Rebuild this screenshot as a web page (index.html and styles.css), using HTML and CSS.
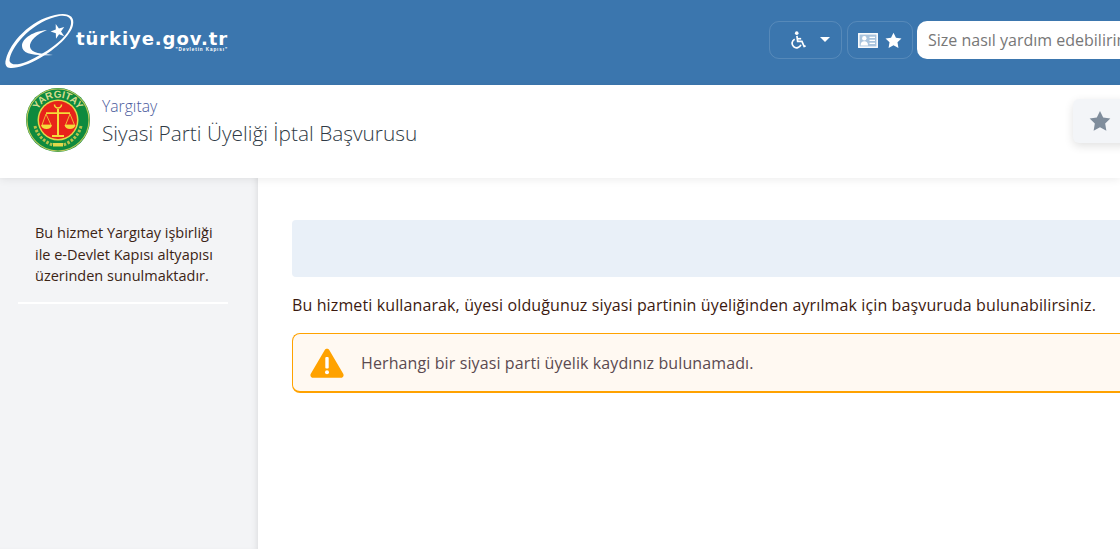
FILE: index.html
```html
<!DOCTYPE html>
<html lang="tr">
<head>
<meta charset="utf-8">
<title>Siyasi Parti Üyeliği İptal Başvurusu</title>
<link rel="stylesheet" href="styles.css">
</head>
<body>
<header class="topbar">
  <a class="logo">
    <svg class="logo-mark" viewBox="0 0 76 62" width="76" height="62" aria-hidden="true">
      <path fill="#fff" fill-rule="evenodd" d="M6 51C10 35 30 12 55 7C68 4 75 8 73 17C71 27 56 41 40 50C26 58 12 62 7 59C5 57 5 54 6 51ZM9.500 53C10 40 30 16 55 9C66 6 72 9 71 16C69 27 55 39 38 48C26 55 12 60 9.500 53Z"/>
      <path fill="#fff" d="M47 22C34 23 22 30 22 38C22 46 34 48 53 47C42 46 31 45 30 39C29 33 37 26 47 22Z"/>
      <path fill="#fff" transform="translate(58 23) rotate(-18) scale(.72) translate(-10 -10.300)" d="M10 0L12.300 7.400L20 7.600L13.800 12.200L16 19.800L10 15.200L4 19.800L6.200 12.200L0 7.600L7.700 7.400Z"/>
    </svg>
    <span class="logo-text">
      <span class="logo-name">türkiye.gov.tr</span>
      <span class="logo-slogan">"Devletin Kapısı"</span>
    </span>
  </a>
  <div class="tools">
    <button class="tool tool-access" type="button">
      <svg viewBox="0 0 20 20" width="18" height="18" aria-hidden="true"><circle cx="8.600" cy="2.400" r="2" fill="#fff"/><path fill="none" stroke="#fff" stroke-width="1.900" d="M8.800 5.500L9.600 11.600H14.400L16.800 17.200L18.400 16.500"/><path fill="none" stroke="#fff" stroke-width="1.900" d="M9.300 8.600H13.500"/><path fill="none" stroke="#fff" stroke-width="1.900" d="M6.300 9.100A5 5 0 1 0 13.200 15.200"/></svg>
      <span class="caret"></span>
    </button>
    <button class="tool tool-user" type="button">
      <svg viewBox="0 0 20 15" width="20" height="15" aria-hidden="true"><rect x=".8" y=".8" width="18.400" height="13.400" fill="#a9c4de" stroke="#fff" stroke-width="1.500"/><circle cx="6.300" cy="5.200" r="2.200" fill="#fff"/><path fill="#fff" d="M2.600 12.400C2.600 9.400 4 8.200 6.300 8.200S10 9.400 10 12.400Z"/><path stroke="#fff" stroke-width="1.200" d="M11.500 4.400H17M11.500 7.400H17M11.500 10.400H17"/></svg>
      <svg viewBox="0 0 20 20" width="17" height="17" aria-hidden="true"><path fill="#fff" d="M10 .8L12.900 6.800L19.400 7.700L14.700 12.200L15.800 18.800L10 15.700L4.200 18.800L5.300 12.200L.6 7.700L7.100 6.800Z"/></svg>
    </button>
    <div class="search">Size nasıl yardım edebilirim?</div>
  </div>
</header>
<section class="service-head">
  <svg class="emblem" viewBox="0 0 64 64" width="64" height="64" aria-hidden="true">
    <defs><path id="arc" d="M10.900 24.300A22.500 22.500 0 0 1 53.100 24.300"/></defs>
    <circle cx="32" cy="32" r="32" fill="#0e8a3e"/>
    <circle cx="32" cy="32" r="31" fill="none" stroke="#b9c75a" stroke-width="1.200"/>
    <text class="emblem-text"><textPath href="#arc" startOffset="50%">YARGITAY</textPath></text>
    <circle cx="32" cy="32" r="20.500" fill="#e3d84a"/>
    <circle cx="32" cy="32" r="19" fill="#e8231a"/>
    <path fill="none" stroke="#f4dc3a" stroke-width="1.500" d="M28.500 16.500A3.500 3.500 0 0 0 35.500 16.500"/>
    <path fill="#f4dc3a" d="M31 21h2v3.300h11v1.700H33V47h5v2H26v-2h5V26H20v-1.700h11Z"/>
    <path fill="none" stroke="#f4dc3a" stroke-width=".8" d="M20 26L16 37H25ZM44 26L39.500 37H48.500Z"/>
    <path fill="#f4dc3a" d="M15 37h11c-.5 2.500-2.500 4-5.500 4S15.500 39.500 15 37ZM38.500 37h11c-.5 2.500-2.500 4-5.500 4S39 39.500 38.500 37Z"/>
    <path fill="none" stroke="#b7c24a" stroke-width="3" stroke-dasharray="2.500 1.500" d="M9 38C11 47 18 54 27 57M55 38C53 47 46 54 37 57"/>
    <path fill="#e3d84a" d="M27 55h10v3.500H27Z"/>
  </svg>
  <div class="service-titles">
    <div class="agency">Yargıtay</div>
    <h1 class="service-name">Siyasi Parti Üyeliği İptal Başvurusu</h1>
  </div>
  <button class="fav" type="button">
    <svg viewBox="0 0 20 20" width="22" height="22" aria-hidden="true"><path fill="#7f8d9c" d="M10 .8L12.900 6.800L19.400 7.700L14.700 12.200L15.800 18.800L10 15.700L4.200 18.800L5.300 12.200L.6 7.700L7.100 6.800Z"/></svg>
  </button>
</section>
<div class="body-wrap">
  <aside class="sidebar">
    <p class="side-note">Bu hizmet Yargıtay işbirliği ile e-Devlet Kapısı altyapısı üzerinden sunulmaktadır.</p>
  </aside>
  <main class="content">
    <div class="blue-box"></div>
    <p class="lead">Bu hizmeti kullanarak, üyesi olduğunuz siyasi partinin üyeliğinden ayrılmak için başvuruda bulunabilirsiniz.</p>
    <div class="warning">
      <svg viewBox="0 0 34 30" width="34" height="30" aria-hidden="true"><path fill="#ffa200" d="M14.600 2.200C15.700.3 18.300.3 19.400 2.200L33.200 25.800C34.300 27.700 33 29.800 30.800 29.800H3.200C1 29.800-.3 27.700.8 25.800Z"/><rect x="15.300" y="9" width="3.400" height="11.500" rx="1" fill="#fff"/><circle cx="17" cy="24.200" r="2" fill="#fff"/></svg>
      <span>Herhangi bir siyasi parti üyelik kaydınız bulunamadı.</span>
    </div>
  </main>
</div>
</body>
</html>
```
FILE: styles.css
```css
* { box-sizing: border-box; }
html, body { margin: 0; height: 100%; overflow: hidden; }
body { width: 1120px; height: 549px; font-family: "Open Sans", "Liberation Sans", sans-serif; color: #3c2415; background: #fff; display: flex; flex-direction: column; }

.topbar { height: 85px; flex: none; background: #3b76ae; display: flex; align-items: flex-start; padding-top: 8px; position: relative; }
.logo { display: flex; align-items: flex-start; height: 62px; }
.logo-mark { flex: none; }
.logo-text { display: flex; flex-direction: column; align-items: flex-end; margin-top: 20px; color: #fff; width: 152px; }
.logo-name { font: bold 18px/21px "DejaVu Sans", sans-serif; letter-spacing: .93px; white-space: nowrap; }
.logo-slogan { font: bold 4.600px/5px "Liberation Sans", sans-serif; letter-spacing: .9px; white-space: nowrap; margin-top: -2px; }

.tools { margin: 13px 0 0 auto; display: flex; align-items: center; gap: 5px; width: 351px; flex: none; }
.tool { height: 38px; background: transparent; border: 1px solid rgba(255,255,255,.14); border-radius: 10px; display: flex; align-items: center; padding: 0; flex: none; }
.tool-access { width: 73px; gap: 13px; padding-left: 19px; }
.tool-user { width: 66px; gap: 7px; padding-left: 10px; }
.caret { width: 0; height: 0; border-left: 5.500px solid transparent; border-right: 5.500px solid transparent; border-top: 5px solid #fff; margin-top: -1px; }
.search { flex: none; width: 203px; height: 38px; margin-left: -1px; background: #fff; border-radius: 10px 0 0 10px; padding-left: 11px; font-size: 16px; line-height: 38px; color: #777; white-space: nowrap; overflow: hidden; }

.service-head { height: 93px; flex: none; background: #fff; display: flex; align-items: flex-start; padding: 3px 0 0 26px; position: relative; z-index: 2; box-shadow: 0 2px 8px rgba(0,0,0,.07); }
.emblem { flex: none; }
.emblem-text { font: bold 10px "Liberation Sans", sans-serif; fill: #d6dc8e; text-anchor: middle; }
.service-titles { margin: 7px 0 0 12px; }
.agency { font-size: 15.700px; font-weight: 300; line-height: 22px; color: #4a5a9c; }
.service-name { margin: 3px 0 0; font-size: 20.850px; font-weight: 300; line-height: 27px; color: #2f3a45; }
.fav { margin: 11px -10px 0 auto; width: 57px; height: 44px; background: #f3f5f8; border: 0; border-radius: 6px; box-shadow: 0 3px 10px rgba(0,0,0,.12); display: flex; align-items: center; padding: 0 0 0 16px; }

.body-wrap { flex: 1; display: flex; min-height: 0; }
.sidebar { width: 258px; flex: none; background: #f3f4f6; padding: 44px 30px 0 18px; box-shadow: inset -5px 0 6px -4px rgba(0,0,0,.1); }
.side-note { margin: 0; width: 210px; padding: 0 8px 15px 17px; font-size: 14.500px; line-height: 21.500px; border-bottom: 2px solid #fff; }
.content { flex: 1; min-width: 0; padding: 42px 0 0 34px; }
.blue-box { height: 57px; width: 900px; background: #e9f0f8; border-radius: 4px 0 0 4px; }
.lead { margin: 16px 0 0; font-size: 16px; letter-spacing: .12px; line-height: 24px; white-space: nowrap; color: #3c1a10; }
.warning { width: 900px; height: 60px; margin-top: 16px; display: flex; align-items: center; gap: 17px; padding-left: 17px; background: #fff9f2; border: 1px solid #ffa200; border-bottom-width: 2px; border-right: 0; border-radius: 8px 0 0 8px; font-size: 16px; letter-spacing: .11px; color: #5b4a50; }
```
